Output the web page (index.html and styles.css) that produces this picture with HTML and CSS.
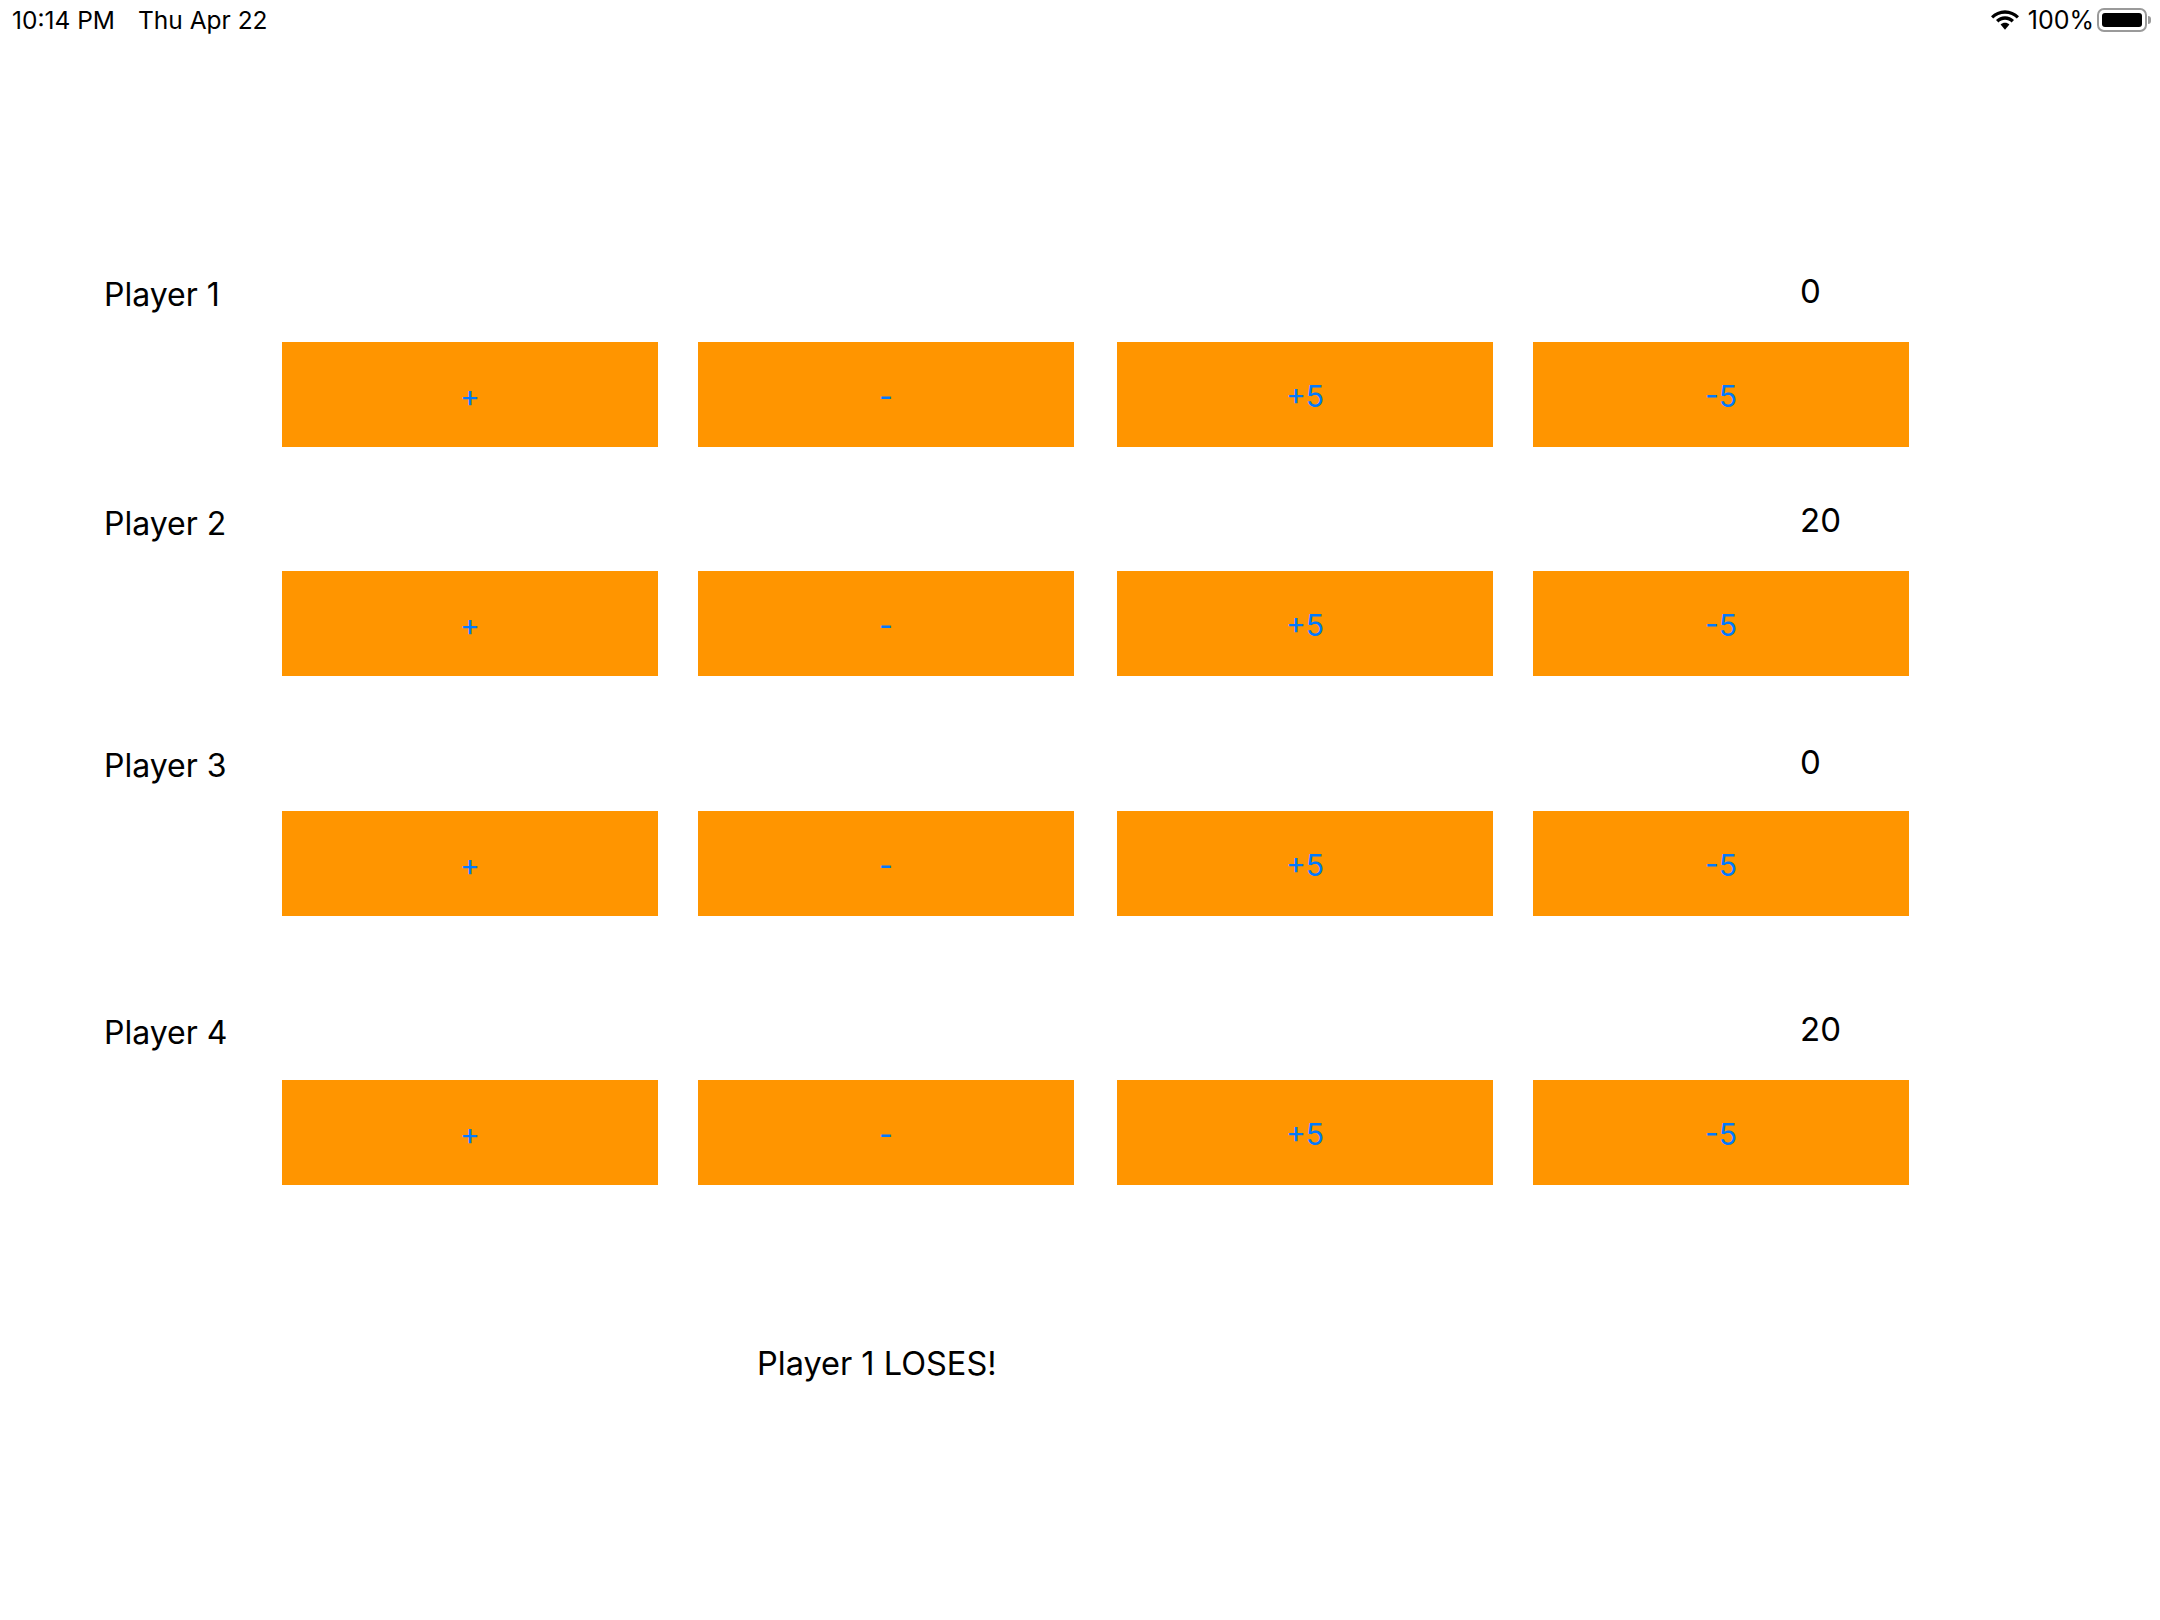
FILE: index.html
```html
<!DOCTYPE html>
<html lang="en">
<head>
    <meta charset="UTF-8">
    <title>Scoreboard</title>
    <link rel="stylesheet" href="styles.css">
</head>
<body>

    <header class="status-bar">
        <div class="status-left">
            <span>10:14 PM</span>
            <span>Thu Apr 22</span>
        </div>
        <div class="status-right">
            <svg class="wifi" viewBox="0 0 28 20" width="28" height="20">
                <path d="M14 3.800C9.200 3.800 5.200 5.600 2.200 8.600L0 6.300C3.700 2.500 8.600 0.200 14 0.200C19.400 0.200 24.300 2.500 28 6.300L25.800 8.600C22.800 5.600 18.800 3.800 14 3.800Z"/>
                <path d="M14 9.800C11.400 9.800 9.200 10.800 7.400 12.400L5 10C7.400 7.700 10.500 6.300 14 6.300C17.500 6.300 20.600 7.700 23 10L20.600 12.400C18.800 10.800 16.600 9.800 14 9.800Z"/>
                <path d="M14 12.800C12.300 12.800 10.800 13.400 9.600 14.500L14 19.700L18.400 14.500C17.200 13.400 15.700 12.800 14 12.800Z"/>
            </svg>
            <span>100%</span>
            <div class="battery"><div class="battery-fill"></div></div>
            <div class="battery-tip"></div>
        </div>
    </header>

    <main>
        <section class="player player-1">
            <div class="player-head">
                <span class="player-name">Player 1</span>
                <span class="player-score">0</span>
            </div>
            <div class="buttons">
                <button>+</button>
                <button>-</button>
                <button>+5</button>
                <button>-5</button>
            </div>
        </section>

        <section class="player player-2">
            <div class="player-head">
                <span class="player-name">Player 2</span>
                <span class="player-score">20</span>
            </div>
            <div class="buttons">
                <button>+</button>
                <button>-</button>
                <button>+5</button>
                <button>-5</button>
            </div>
        </section>

        <section class="player player-3">
            <div class="player-head">
                <span class="player-name">Player 3</span>
                <span class="player-score">0</span>
            </div>
            <div class="buttons">
                <button>+</button>
                <button>-</button>
                <button>+5</button>
                <button>-5</button>
            </div>
        </section>

        <section class="player player-4">
            <div class="player-head">
                <span class="player-name">Player 4</span>
                <span class="player-score">20</span>
            </div>
            <div class="buttons">
                <button>+</button>
                <button>-</button>
                <button>+5</button>
                <button>-5</button>
            </div>
        </section>

        <p class="result">Player 1 LOSES!</p>
    </main>

</body>
</html>
```

FILE: styles.css
```css
body{
  margin: 0;
  background: white;
  color: black;
  font-family: 'Inter', 'Liberation Sans', sans-serif;
}

.status-bar{
  display: flex;
  justify-content: space-between;
  align-items: center;
  height: 40px;
  padding: 0 9px 0 12px;
  font-size: 24.5px;
}

.status-left{
  display: flex;
  gap: 23px;
}

.status-right{
  display: flex;
  align-items: center;
  font-size: 25px;
}

.wifi{
  margin-right: 9px;
}

.battery{
  width: 50px;
  height: 24px;
  margin-left: 3px;
  padding: 3px;
  box-sizing: border-box;
  border: 2px solid #9a9a9a;
  border-radius: 7px;
}

.battery-fill{
  height: 100%;
  background: black;
  border-radius: 3px;
}

.battery-tip{
  width: 3px;
  height: 8px;
  margin-left: 1px;
  background: #9a9a9a;
  border-radius: 0 3px 3px 0;
}

.player-1{
  margin-top: 228px;
}

.player-2{
  margin-top: 50px;
}

.player-3{
  margin-top: 63px;
}

.player-4{
  margin-top: 90px;
}

.player-head{
  display: flex;
  align-items: center;
  height: 52px;
  padding: 0 0 22px 104px;
  font-size: 32px;
}

.player-3 .player-head{
  padding-bottom: 20px;
}

.player-name{
  width: 1696px;
}

.player-score{
  margin-bottom: 6px;
  font-size: 33px;
}

.buttons{
  display: flex;
  margin-left: 282px;
  gap: 40px;
}

.buttons button{
  width: 376px;
  height: 105px;
  padding: 2px 0 0;
  border: none;
  border-radius: 0;
  background: #ff9500;
  color: #007aff;
  font-family: inherit;
  font-size: 30px;
}

.buttons button:nth-child(3){
  margin-left: 3px;
}

.result{
  margin: 159px 0 0 757px;
  font-size: 32.5px;
}
```
